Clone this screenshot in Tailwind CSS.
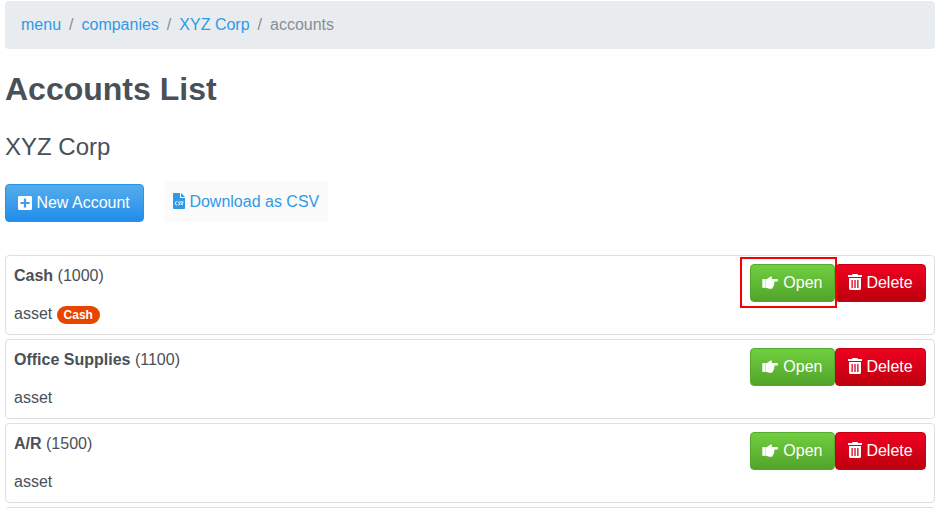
<!DOCTYPE html>
<html lang="en">
<head>
<meta charset="utf-8">
<title>Accounts List</title>
<script src="https://cdn.jsdelivr.net/npm/@tailwindcss/browser@4"></script>
</head>
<body class="h-[508px] overflow-hidden bg-white px-[5px] pr-1 pt-px font-['Liberation_Sans',Arial,sans-serif] text-base leading-6 text-[#495057]">
<svg class="hidden">
  <symbol id="hand" viewBox="0 0 16 14"><path d="M.8 3.300h2.500v8.200H.8z"/><path opacity=".6" d="M0 3h4.200v9H0z"/><path d="M4 3.100h1L8.200.7c1-.7 2.100.2 1.700 1.200L9.300 3H15c1.300 0 1.300 2.500 0 2.500h-2.800c.5.7.5 1.500-.1 2.100.4.7.1 1.500-.5 1.900.2.9-.2 1.500-.9 1.700 0 1-.6 1.500-1.500 1.500H7.300C6 12.700 5.200 11.800 4 11.800z"/></symbol>
  <symbol id="trash" viewBox="0 0 14 16"><path fill-rule="evenodd" d="M4 1 4.700 0h4.600L10 1h4v2H0V1zM1 4h12v10.500c0 .9-.6 1.500-1.500 1.500h-9C1.600 16 1 15.400 1 14.500zm2.500 2v8h1.300V6zm2.850 0v8h1.300V6zm2.850 0v8h1.300V6z"/></symbol>
</svg>
<nav class="flex h-12 items-center gap-2 rounded bg-[#e9ecef] px-4 text-[#868e96]">
  <a class="text-[#2f9ae7]">menu</a><span>/</span><a class="text-[#2f9ae7]">companies</a><span>/</span><a class="text-[#2f9ae7]">XYZ Corp</a><span>/</span><span>accounts</span>
</nav>
<h1 class="mt-[21px] text-[32px] font-bold leading-[38px]">Accounts List</h1>
<h2 class="mt-6 text-2xl leading-[29px]">XYZ Corp</h2>
<div class="mt-5 flex items-start gap-5">
  <button class="mt-[3px] flex h-[38px] w-[139px] items-center rounded border border-[#2a93e6] bg-linear-to-b from-[#54adeb] to-[#1f8dea] pl-3 text-white">
    <svg class="mr-[4.4px] -mt-px h-3.5 w-3.5" viewBox="0 0 14 14" fill="currentColor"><path fill-rule="evenodd" d="M1.500 0h11C13.400 0 14 .6 14 1.500v11c0 .9-.6 1.500-1.500 1.500h-11C.6 14 0 13.400 0 12.500v-11C0 .6.6 0 1.500 0zM5.900 2.500v3.400H2.500v2.200h3.400v3.400h2.200V8.100h3.400V5.900H8.100V2.500z"/></svg>
    <span>New Account</span>
  </button>
  <a class="flex h-[42px] w-[164px] items-center rounded bg-[#fbfbfb] pl-[9px] text-[#2f9ae7]">
    <svg class="mr-[4.400px] mt-[-2px] h-4 w-3" viewBox="0 0 12 16"><path fill="currentColor" d="M.8 0H7v4.200c0 .5.3.8.8.8H12v10.200c0 .5-.3.800-.8.800H.8c-.5 0-.8-.3-.8-.8V.8C0 .3.300 0 .8 0zM8 0l4 4H8z"/><path fill="none" stroke="white" stroke-width="1" d="M4.300 8.700H3.400c-.6 0-.9.3-.9.800v1.400c0 .6.300.9.900.9h.9M7.200 8.700h-.7c-1.200 0-1.200 1.300-.3 1.500.9.200.9 1.600-.2 1.600h-.7M8 8.200v1c0 1 .4 2 .9 2.700.5-.7.900-1.700.9-2.700v-1"/></svg>
    <span>Download as CSV</span>
  </a>
</div>
<main class="mt-8 flex flex-col gap-1">
  <section class="flex h-20 justify-between rounded border border-[#dfdfdf] p-2">
    <div class="flex flex-col gap-3.5"><p><b>Cash</b> (1000)</p><p class="flex items-center">asset<span class="ml-[4.5px] mt-0.5 h-[18px] w-[43px] rounded-full bg-[#e84500] text-center text-xs font-bold leading-[18px] text-white">Cash</span></p></div>
    <div class="relative flex">
      <button class="flex h-[38px] w-[85px] items-center rounded border border-[#55aa2e] bg-linear-to-b from-[#70cf3f] to-[#51a42b] pl-[11px] text-white"><svg class="mr-[5.3px] -mt-px h-3.5 w-4" fill="currentColor"><use href="#hand"/></svg>Open</button>
      <button class="flex h-[38px] w-[91px] items-center rounded border border-[#c7000e] bg-linear-to-b from-[#f00022] to-[#bd000d] pl-3 text-white"><svg class="mr-[4.4px] -mt-0.5 h-4 w-3.5" fill="currentColor"><use href="#trash"/></svg>Delete</button>
      <span class="absolute -left-2.5 -top-[7px] h-[51px] w-[97px] border-2 border-[#f80000]"></span>
    </div>
  </section>
  <section class="flex h-20 justify-between rounded border border-[#dfdfdf] p-2">
    <div class="flex flex-col gap-3.5"><p><b>Office Supplies</b> (1100)</p><p>asset</p></div>
    <div class="flex">
      <button class="flex h-[38px] w-[85px] items-center rounded border border-[#55aa2e] bg-linear-to-b from-[#70cf3f] to-[#51a42b] pl-[11px] text-white"><svg class="mr-[5.3px] -mt-px h-3.5 w-4" fill="currentColor"><use href="#hand"/></svg>Open</button>
      <button class="flex h-[38px] w-[91px] items-center rounded border border-[#c7000e] bg-linear-to-b from-[#f00022] to-[#bd000d] pl-3 text-white"><svg class="mr-[4.4px] -mt-0.5 h-4 w-3.5" fill="currentColor"><use href="#trash"/></svg>Delete</button>
    </div>
  </section>
  <section class="flex h-20 justify-between rounded border border-[#dfdfdf] p-2">
    <div class="flex flex-col gap-3.5"><p><b>A/R</b> (1500)</p><p>asset</p></div>
    <div class="flex">
      <button class="flex h-[38px] w-[85px] items-center rounded border border-[#55aa2e] bg-linear-to-b from-[#70cf3f] to-[#51a42b] pl-[11px] text-white"><svg class="mr-[5.3px] -mt-px h-3.5 w-4" fill="currentColor"><use href="#hand"/></svg>Open</button>
      <button class="flex h-[38px] w-[91px] items-center rounded border border-[#c7000e] bg-linear-to-b from-[#f00022] to-[#bd000d] pl-3 text-white"><svg class="mr-[4.4px] -mt-0.5 h-4 w-3.5" fill="currentColor"><use href="#trash"/></svg>Delete</button>
    </div>
  </section>
  <div class="mx-0.5 h-px bg-[#dfdfdf]"></div>
</main>
</body>
</html>
